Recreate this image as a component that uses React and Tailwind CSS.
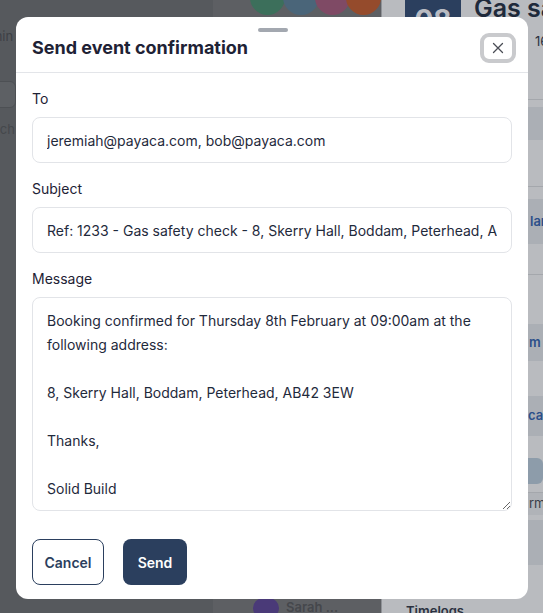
import React from 'react';

const font = { fontFamily: 'Inter, "Noto Sans", sans-serif' };

function Backdrop() {
  return (
    <div className="absolute inset-0 flex">
      {/* left app area, dimmed */}
      <div className="shrink-0 w-[213px] h-full bg-[#56595d] relative overflow-hidden">
        <div className="pt-[27px] -ml-[26px] text-[13px] text-[#3d4045] whitespace-nowrap">Admin</div>
        <div className="mt-[34px] w-[40px] h-[27px] -ml-[24px] rounded-md bg-[#5d6064] border border-[#4d5054]" />
        <div className="mt-[12px] -ml-[16px] text-[13px] text-[#45484c]">Bach</div>
      </div>
      <div className="shrink-0 w-[168px] h-full bg-[#5d5f63] relative overflow-hidden">
        <div className="flex -mt-[21px] ml-[37px]">
          <div className="w-[36px] h-[36px] rounded-full bg-[#3c6f5b]" />
          <div className="w-[36px] h-[36px] rounded-full bg-[#4a6579] -ml-[2px]" />
          <div className="w-[36px] h-[36px] rounded-full bg-[#7f4a65] -ml-[4px]" />
          <div className="w-[36px] h-[36px] rounded-full bg-[#954b2c] -ml-[4px]" />
        </div>
        <div className="absolute left-[40px] top-[598px] flex items-center gap-[7px]">
          <div className="w-[26px] h-[20px] rounded-full bg-[#4a3a78]" />
          <span className="text-[13px] text-[#45474c] font-semibold whitespace-nowrap">Sarah ...</span>
        </div>
      </div>
      {/* right detail panel, dimmed */}
      <div className="flex-1 min-w-0 overflow-hidden h-full bg-[#b9bbbf] border-l border-[#8f9297] flex flex-col">
        <div className="h-[99px] shrink-0 flex items-start gap-[13px] pl-[23px] relative">
          <div className="shrink-0 w-[56px] h-[22px] bg-[#2b3f5e] overflow-hidden flex items-end justify-center">
            <span className="text-[28px] leading-[28px] font-bold text-[#b9bbc2] -mb-[12px]">08</span>
          </div>
          <span className="text-[25px] leading-none font-semibold text-[#1f2a3b] -mt-[4px] whitespace-nowrap">Gas safety check</span>
          <span className="absolute left-[153px] top-[32px] text-[13px] text-[#2a3140] whitespace-nowrap">16:00</span>
        </div>
        <div className="h-px shrink-0 bg-[#a4a7ac]" />
        <div className="mt-[7px] h-[33px] shrink-0 bg-[#abafb5]" />
        <div className="mt-[46px] h-px shrink-0 bg-[#a4a7ac]" />
        <div className="mt-[12px] h-[45px] shrink-0 bg-[#abafb5] flex items-center pl-[148px] text-[13px] font-semibold text-[#2c4f8a]">lan</div>
        <div className="mt-[30px] h-px shrink-0 bg-[#a4a7ac]" />
        <div className="mt-[49px] h-[37px] shrink-0 bg-[#abafb5] flex items-center pl-[147px] text-[13px] font-semibold text-[#2c4f8a]">m</div>
        <div className="mt-[35px] h-[40px] shrink-0 bg-[#abafb5] flex items-center pl-[146px] text-[13px] font-semibold text-[#2c4f8a]">ca.</div>
        <div className="mt-[22px] h-[26px] shrink-0 ml-[100px] rounded-md bg-[#8d9caa]" />
        <div className="mt-[8px] h-px shrink-0 bg-[#a4a7ac]" />
        <div className="h-[22px] shrink-0 bg-[#b0b3b8] flex items-center pl-[147px] text-[13px] text-[#3a3f48]">rm</div>
        <div className="mt-[5px] h-[45px] shrink-0 bg-[#abafb5]" />
        <div className="mt-[37px] shrink-0 pl-[24px] text-[13px] font-semibold text-[#2a3140]">Timelogs</div>
      </div>
    </div>
  );
}

function Field({ label, children }) {
  return (
    <div className="flex flex-col">
      <label className="text-[14px] leading-[20px] text-[#1e2235] mb-[8px]">{label}</label>
      {children}
    </div>
  );
}

export default function App() {
  const message =
    'Booking confirmed for Thursday 8th February at 09:00am at the following address:\n\n8, Skerry Hall, Boddam, Peterhead, AB42 3EW\n\nThanks,\n\nSolid Build';

  return (
    <div className="relative w-[543px] h-[613px] overflow-hidden" style={font}>
      <Backdrop />

      {/* Modal */}
      <div className="absolute left-[16px] top-[17px] w-[512px] h-[582px] bg-white rounded-xl flex flex-col">
        <div className="relative h-[56px] flex items-center justify-between px-4 pt-[6px] border-b border-[#e3e5e9]">
          <div className="absolute left-[242px] top-[11px] w-[30px] h-[4px] rounded-full bg-[#a3a8b0]" />
          <h2 className="text-[18px] font-bold text-[#1e2235]">Send event confirmation</h2>
          <button className="w-[36px] h-[30px] -mr-[4px] rounded-[9px] border-[4px] border-[#c9cacd] bg-white flex items-center justify-center">
            <svg width="12" height="12" viewBox="0 0 12 12" fill="none" stroke="#4a4d55" strokeWidth="1.3" strokeLinecap="round">
              <path d="M1.5 1.5 L10.5 10.5 M10.5 1.5 L1.5 10.5" />
            </svg>
          </button>
        </div>

        <div className="px-4 pt-[16px] flex flex-col gap-[16px]">
          <Field label="To">
            <input
              readOnly
              defaultValue="jeremiah@payaca.com, bob@payaca.com"
              className="h-[46px] px-[14px] rounded-lg border border-[#e2e4e8] text-[14px] text-[#1f2a3c] outline-none"
              style={font}
            />
          </Field>
          <Field label="Subject">
            <input
              readOnly
              defaultValue="Ref: 1233 - Gas safety check - 8, Skerry Hall, Boddam, Peterhead, AB42 3EW"
              className="h-[46px] px-[14px] rounded-lg border border-[#e2e4e8] text-[14px] text-[#1f2a3c] outline-none"
              style={font}
            />
          </Field>
          <Field label="Message">
            <textarea
              readOnly
              defaultValue={message}
              className="h-[214px] px-[14px] py-[11px] rounded-lg border border-[#e2e4e8] text-[14px] leading-[24px] text-[#1f2a3c] outline-none"
              style={font}
            />
          </Field>
        </div>

        <div className="px-4 mt-[28px] flex gap-[19px]">
          <button className="w-[72px] h-[46px] rounded-lg border border-[#2b3f5e] text-[14px] font-semibold text-[#2b3f5e] bg-white">
            Cancel
          </button>
          <button className="w-[64px] h-[46px] rounded-lg bg-[#2b3f5e] text-[14px] font-semibold text-white">
            Send
          </button>
        </div>
      </div>
    </div>
  );
}
